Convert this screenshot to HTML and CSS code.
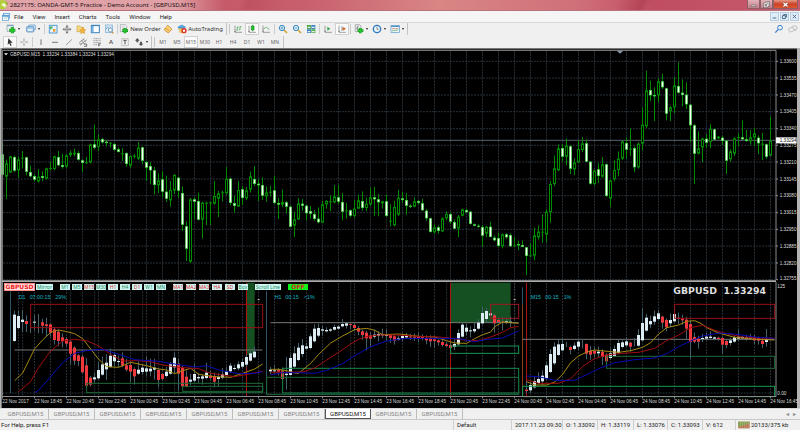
FILE: index.html
```html
<!DOCTYPE html>
<html lang="en">
<head>
<meta charset="utf-8">
<title>2827175: OANDA-GMT-5 Practice - Demo Account - [GBPUSD,M15]</title>
<link rel="stylesheet" href="styles.css">
</head>
<body>
<header class="titlebar">
  <svg class="app-icon" viewBox="0 0 30 30" aria-hidden="true"><circle cx="7" cy="14" r="14" fill="#b4cf3c"/><path d="M3 15l8-7 8 8-5 7-4-5z" fill="#f3f8d8"/><path d="M18 4l7 8-4 2z" fill="#7f9c22"/></svg>
  <h1 class="title">2827175: OANDA-GMT-5 Practice - Demo Account - [GBPUSD,M15]</h1>
  <div class="caption">
    <button class="cap" aria-label="Minimize"><svg viewBox="0 0 24 24"><path d="M4 14h16v5H4z" fill="#fff" stroke="#555" stroke-width="2"/></svg></button>
    <button class="cap" aria-label="Restore"><svg viewBox="0 0 24 24"><path d="M9 4h11v11h-4M4 9h11v11H4z" fill="none" stroke="#555" stroke-width="6"/><path d="M9 4h11v11h-4M4 9h11v11H4z" fill="none" stroke="#fff" stroke-width="3"/></svg></button>
    <button class="cap close" aria-label="Close"><svg viewBox="0 0 24 24"><path d="M5 6l14 13M19 6L5 19" stroke="#733" stroke-width="8"/><path d="M5 6l14 13M19 6L5 19" stroke="#fff" stroke-width="5"/></svg></button>
  </div>
</header>

<nav class="menubar">
  <svg class="menu-icon" viewBox="0 0 30 30" aria-hidden="true"><rect x="7" y="4" width="19" height="15" fill="#dcebf8" stroke="#4c94cf" stroke-width="2"/><rect x="4" y="10" width="19" height="15" fill="#fff" stroke="#4c94cf" stroke-width="2"/><path d="M4 12h19" stroke="#4c94cf" stroke-width="4"/><path d="M8 21l4-4 3 3 5-4" fill="none" stroke="#6a9" stroke-width="2"/></svg>
  <button>File</button><button>View</button><button>Insert</button><button>Charts</button><button>Tools</button><button>Window</button><button>Help</button>
  <div class="mdi">
    <button aria-label="Minimize chart"><svg viewBox="0 0 24 24"><path d="M6 17h12" stroke="#3e5f80" stroke-width="3"/></svg></button>
    <button aria-label="Restore chart"><svg viewBox="0 0 24 24"><path d="M9 9V5h10v9h-4M5 9h10v10H5z" fill="none" stroke="#3e5f80" stroke-width="3"/></svg></button>
    <button aria-label="Close chart"><svg viewBox="0 0 24 24"><path d="M6 6l12 12M18 6L6 18" stroke="#3e5f80" stroke-width="3"/></svg></button>
  </div>
</nav>

<div class="toolbars">
  <div class="toolbar">
    <div class="band standard">
      <button class="tool drop" aria-label="New chart"><svg viewBox="0 0 30 30"><path d="M3 3h19v19H3z" fill="#e8f2ea" stroke="#8a9aa0" stroke-width="2"/><path d="M3 5h19" stroke="#6d9fc4" stroke-width="3"/><path d="M19 10v18M10 19h18" stroke="#108a20" stroke-width="9"/><path d="M19 11v16M11 19h16" stroke="#25c52d" stroke-width="6"/></svg></button>
      <button class="tool drop" aria-label="Profiles"><svg viewBox="0 0 30 30"><rect x="8" y="3" width="20" height="15" rx="2" fill="#d8ebfa" stroke="#558dc0" stroke-width="2"/><rect x="2" y="8" width="21" height="16" rx="2" fill="#a9cdec" stroke="#427fb5" stroke-width="2"/><path d="M5 18h15" stroke="#eef7fd" stroke-width="5"/></svg></button>
      <i class="sep"></i>
      <button class="tool" aria-label="Market watch"><svg viewBox="0 0 30 30"><rect x="4" y="4" width="23" height="23" fill="#e5f1fb" stroke="#5a9fd4" stroke-width="3"/><path d="M8 16V9h6M8 9l5 5" stroke="#28a83c" stroke-width="3" fill="none"/><path d="M15 15h7v8h-7z" fill="#f39b27"/></svg></button>
      <button class="tool" aria-label="Data window"><svg viewBox="0 0 30 30"><circle cx="15" cy="16" r="6" fill="none" stroke="#888" stroke-width="2"/><path d="M15 5v22M4 16h22" stroke="#777" stroke-width="2"/><path d="M15 2l4 6h-8zM15 30l4-6h-8zM1 16l6-4v8zM29 16l-6-4v8z" fill="#777"/></svg></button>
      <button class="tool" aria-label="Navigator"><svg viewBox="0 0 30 30"><path d="M3 6h9l3 4h8v13H3z" fill="#f7dc83" stroke="#c9a544" stroke-width="2"/><path d="M20 10l3 6 7 1-5 5 1 7-6-3-6 3 1-7-5-5 7-1z" fill="#f5b43b" stroke="#bd7d18" stroke-width="1"/></svg></button>
      <button class="tool" aria-label="Terminal"><svg viewBox="0 0 30 30"><rect x="4" y="4" width="24" height="22" fill="#fff" stroke="#3d83bd" stroke-width="3"/><path d="M5 5h6v20H5z" fill="#79b3e2"/><path d="M4 5h24" stroke="#3d83bd" stroke-width="3"/></svg></button>
      <button class="tool" aria-label="Strategy tester"><svg viewBox="0 0 30 30"><rect x="4" y="3" width="21" height="22" fill="#d8eaf7" stroke="#72a7cf" stroke-width="2"/><path d="M6 15l5-6 5 5 6-6" fill="none" stroke="#5685ae" stroke-width="2"/><circle cx="19" cy="18" r="6" fill="#e9f4fb" stroke="#5c86a9" stroke-width="2"/><path d="M23 23l5 5" stroke="#c99340" stroke-width="4"/></svg></button>
      <i class="sep"></i>
      <button class="tool text"><svg viewBox="0 0 30 30"><path d="M4 2h15l4 4v17H4z" fill="#f5f6f6" stroke="#929da5" stroke-width="2"/><path d="M8 9h10M8 14h8" stroke="#aab" stroke-width="2"/><path d="M18 12v16M10 20h17" stroke="#118b20" stroke-width="8"/><path d="M18 13v14M11 20h15" stroke="#27c42f" stroke-width="5"/></svg>New Order</button>
      <button class="tool" aria-label="MetaEditor"><svg viewBox="0 0 30 30"><path d="M14 4l13 11-11 12L3 17z" fill="#efb144" stroke="#bb7820" stroke-width="2"/><path d="M5 17l11 5 9-8" fill="none" stroke="#fff0bd" stroke-width="2"/><path d="M13 6l12 9-5 2-11-6z" fill="#ffd883"/></svg></button>
      <button class="tool text auto"><svg viewBox="0 0 30 30"><ellipse cx="14" cy="10" rx="12" ry="5" fill="#4e9ada"/><path d="M7 9c0-8 14-8 14 0z" fill="#69b3eb" stroke="#357db7"/><path d="M5 14h19l-6 12H9z" fill="#f4cb58" stroke="#c59b30"/><circle cx="21" cy="20" r="8" fill="#dc3929"/><path d="M18 17h6v6h-6z" fill="#fff"/></svg>AutoTrading</button>
    </div>
    <div class="band">
      <button class="tool" aria-label="Bar chart"><svg viewBox="0 0 30 30"><path d="M6 5v20h21M3 22h6" fill="none" stroke="#777" stroke-width="2"/><path d="M13 8v12M10 18h3M13 10h4M21 6v12M18 17h3M21 8h4" fill="none" stroke="#36a345" stroke-width="2"/></svg></button>
      <button class="tool on" aria-label="Candlesticks"><svg viewBox="0 0 30 30"><path d="M6 5v20h21M3 22h6" fill="none" stroke="#777" stroke-width="2"/><path d="M17 2v20" stroke="#168b24" stroke-width="2"/><path d="M13 6h8v12h-8z" fill="#23c62e" stroke="#168b24" stroke-width="2"/></svg></button>
      <button class="tool" aria-label="Line chart"><svg viewBox="0 0 30 30"><path d="M6 5v20h21M3 22h6" fill="none" stroke="#777" stroke-width="2"/><path d="M7 17q9-15 18 1" fill="none" stroke="#45a653" stroke-width="2"/></svg></button>
      <i class="sep"></i>
      <button class="tool" aria-label="Zoom in"><svg viewBox="0 0 30 30"><path d="M18 18l9 9" stroke="#d4a32e" stroke-width="5"/><circle cx="12" cy="12" r="8" fill="#d7eefb" stroke="#418dc1" stroke-width="3"/><path d="M12 8v8M8 12h8" stroke="#327faf" stroke-width="2"/></svg></button>
      <button class="tool" aria-label="Zoom out"><svg viewBox="0 0 30 30"><path d="M18 18l9 9" stroke="#d4a32e" stroke-width="5"/><circle cx="12" cy="12" r="8" fill="#d7eefb" stroke="#418dc1" stroke-width="3"/><path d="M8 12h8" stroke="#327faf" stroke-width="2"/></svg></button>
      <button class="tool" aria-label="Tile windows"><svg viewBox="0 0 30 30"><path d="M3 3h12v12H3zM16 16h12v11H16z" fill="#4faa45"/><path d="M16 3h12v12H16zM3 16h12v11H3z" fill="#3c83c4"/><path d="M5 8h8v4H5zM18 8h8v4h-8zM5 21h8v4H5zM18 21h8v4h-8z" fill="#e9f4f8"/></svg></button>
      <i class="sep"></i>
      <button class="tool" aria-label="Auto scroll"><svg viewBox="0 0 30 30"><path d="M6 5v20h21M3 22h6" fill="none" stroke="#777" stroke-width="2"/><path d="M13 8l9 6-9 6z" fill="#35a545"/></svg></button>
      <button class="tool on" aria-label="Chart shift"><svg viewBox="0 0 30 30"><path d="M6 5v20h21M3 22h6" fill="none" stroke="#777" stroke-width="2"/><path d="M15 6v15" stroke="#4779a8" stroke-width="2"/><path d="M25 11v6h-5v4l-5-7 5-6v3z" fill="#d6682d"/></svg></button>
      <i class="sep"></i>
      <button class="tool drop" aria-label="Indicators"><svg viewBox="0 0 30 30"><path d="M4 2h13l4 4v17H4z" fill="#eee" stroke="#8b9297" stroke-width="2"/><path d="M14 7q-4-2-4 3v9M7 12h6" fill="none" stroke="#666" stroke-width="2"/><path d="M19 12v16M11 20h17" stroke="#118b20" stroke-width="8"/><path d="M19 13v14M12 20h15" stroke="#27c42f" stroke-width="5"/></svg></button>
      <button class="tool drop" aria-label="Periods"><svg viewBox="0 0 30 30"><circle cx="15" cy="15" r="11" fill="#e9f5fd" stroke="#2e76bd" stroke-width="4"/><path d="M15 8v8h5" fill="none" stroke="#555" stroke-width="2"/></svg></button>
      <button class="tool drop" aria-label="Templates"><svg viewBox="0 0 30 30"><rect x="3" y="5" width="25" height="20" fill="#edf7fc" stroke="#5395c7" stroke-width="2"/><path d="M3 7h25" stroke="#5395c7" stroke-width="4"/><path d="M6 15l6-2 5 2 8-3" fill="none" stroke="#c96841" stroke-width="2"/><path d="M6 21l6-2 5 1 8-3" fill="none" stroke="#53a65b" stroke-width="2"/></svg></button>
    </div>
    <div class="aside">
      <button class="tool" aria-label="Search"><svg viewBox="0 0 30 30"><circle cx="18" cy="11" r="7" fill="#eaf4fc" stroke="#3d7fca" stroke-width="3"/><path d="M12 17l-8 9" stroke="#3d7fca" stroke-width="4"/></svg></button>
      <button class="tool" aria-label="Community"><svg viewBox="0 0 36 30"><ellipse cx="23" cy="11" rx="10" ry="7" fill="#f1f1f1" stroke="#999" stroke-width="2"/><ellipse cx="12" cy="17" rx="10" ry="7" fill="#f1f1f1" stroke="#999" stroke-width="2"/><path d="M7 22l-1 6 6-4M27 17l2 5-6-4" fill="#eee" stroke="#999"/></svg></button>
    </div>
  </div>

  <div class="toolbar">
    <div class="band">
      <button class="tool on" aria-label="Cursor"><svg viewBox="0 0 30 30"><path d="M10 4l13 13h-7l4 8-4 2-3-8-5 4z" fill="#333"/></svg></button>
      <button class="tool" aria-label="Crosshair"><svg viewBox="0 0 30 30"><path d="M15 4v9M15 18v9M4 15h9M18 15h9" stroke="#777" stroke-width="2"/></svg></button>
      <i class="sep"></i>
      <button class="tool" aria-label="Vertical line"><svg viewBox="0 0 30 30"><path d="M15 7v17" stroke="#777" stroke-width="3"/></svg></button>
      <button class="tool" aria-label="Horizontal line"><svg viewBox="0 0 30 30"><path d="M6 16h18" stroke="#777" stroke-width="3"/></svg></button>
      <button class="tool" aria-label="Trendline"><svg viewBox="0 0 30 30"><path d="M6 24L24 7" stroke="#777" stroke-width="2"/></svg></button>
      <button class="tool" aria-label="Channel"><svg viewBox="0 0 30 30"><path d="M3 18L20 4M6 25L27 8M9 9l12 15M14 5l9 11M4 21l8-1" stroke="#777" stroke-width="2"/><path d="M18 21h8v7h-8" fill="none" stroke="#444" stroke-width="2"/></svg></button>
      <button class="tool" aria-label="Fibonacci"><svg viewBox="0 0 30 30"><path d="M4 5h22M4 11h22M4 17h22M4 23h12" stroke="#777" stroke-width="2" stroke-dasharray="3 1"/><path d="M20 28v-8h6M20 24h5" fill="none" stroke="#444" stroke-width="2"/></svg></button>
      <button class="tool glyph">A</button>
      <button class="tool" aria-label="Text label"><svg viewBox="0 0 30 30"><rect x="5" y="5" width="20" height="21" fill="none" stroke="#999" stroke-width="2" stroke-dasharray="3 1"/><path d="M10 10h10M15 10v12" stroke="#555" stroke-width="3"/></svg></button>
      <button class="tool drop" aria-label="Arrows"><svg viewBox="0 0 30 30"><path d="M10 3l7 8h-4v5H7v-5H3zM21 27l7-7h-4v-6h-6v6h-4z" fill="#555"/></svg></button>
    </div>
    <div class="band">
      <button class="tool tf">M1</button><button class="tool tf">M5</button><button class="tool tf on">M15</button><button class="tool tf">M30</button><button class="tool tf">H1</button><button class="tool tf">H4</button><button class="tool tf">D1</button><button class="tool tf">W1</button><button class="tool tf">MN</button>
    </div>
  </div>
</div>

<main class="workspace">
  <svg class="chart" id="price" viewBox="0 144 2400 702" role="img" aria-label="GBPUSD M15 price chart"></svg>
  <section class="indicator">
    <svg class="chart" id="mirror" viewBox="0 846 2400 378" role="img" aria-label="Mirror indicator"></svg>
    <div class="chips">
      <div class="group"><button class="chip symbol">GBPUSD</button><button class="chip mid">Mirror</button></div>
      <div class="group"><button class="chip">M1</button><button class="chip">M5</button><button class="chip red">M15</button><button class="chip">M30</button><button class="chip red">H1</button><button class="chip">H4</button><button class="chip red">D1</button><button class="chip">W1</button><button class="chip">MN</button></div>
      <div class="group avgs"><button class="chip red">MA1</button><button class="chip red">MA2</button><button class="chip red">MA3</button><button class="chip red">HA</button><button class="chip red">SD</button><button class="chip">Box</button></div>
      <button class="chip wide">Scroll Line</button>
      <button class="chip off">OFF</button>
    </div>
  </section>
</main>

<nav class="tabs">
  <button>GBPUSD,M15</button><button>GBPUSD,M15</button><button>GBPUSD,M15</button><button>GBPUSD,M15</button><button>GBPUSD,M15</button><button>GBPUSD,M15</button><button>GBPUSD,M15</button><button class="active">GBPUSD,M15</button><button>GBPUSD,M15</button><button>GBPUSD,M15</button>
  <div class="scroll"><button aria-label="Previous tabs">◂</button><button aria-label="Next tabs">▸</button></div>
</nav>

<footer class="status">
  <span>For Help, press F1</span><span>Default</span><span>2017.11.23 09:30</span><span>O: 1.33092</span><span>H: 1.33119</span><span>L: 1.33076</span><span>C: 1.33093</span><span>V: 612</span>
  <span class="traffic"><svg viewBox="0 0 36 24" aria-hidden="true"><path d="M1 2h34v20H1z" fill="#b3704c"/><path d="M1 2h34v5L1 18z" fill="#7da04c"/><path d="M7 2v20M13 2v20M19 2v20M25 2v20M31 2v20" stroke="#eadfca" stroke-width="1"/></svg>20133/375 kb</span>
</footer>
<script src="chart.js"></script>
</body>
</html>
```
FILE: styles.css
```css
* { box-sizing: border-box; }
body {
  margin: 0;
  min-height: 100vh;
  display: flex;
  flex-direction: column;
  background: #f0f0f0;
  color: #1c1c1c;
  font: 6px/8px "Noto Sans", "Open Sans", sans-serif;
}
button {
  margin: 0;
  padding: 0;
  border: 0;
  background: none;
  color: inherit;
  font: inherit;
  white-space: nowrap;
}
svg { display: block; }

.titlebar {
  display: flex;
  height: 11px;
  background:
    linear-gradient(115deg, transparent 30%, #b8485880 31%, transparent 36%, transparent 77%, #a83a4c90 80%, transparent 81%),
    linear-gradient(90deg, #e0a4a9 0, #dfa0a5 22%, #c65a69 28%, #c85f6d 38%, #d98685 55%, #d07079 72%, #c04d62 82%, #c75a6c 100%);
  border-bottom: 1px solid #b9737d;
}
.app-icon { width: 10px; height: 10px; }
.title { margin: 0; flex: 1; font: inherit; line-height: 10px; color: #241014; }
.caption { display: flex; padding-right: 2px; height: 9px; }
.cap {
  width: 13px;
  display: flex;
  justify-content: center;
  align-items: center;
  border: 1px solid #8f5f67;
  border-top: 0;
  background: linear-gradient(#e3b3b9, #c08089);
}
.cap svg { width: 7px; height: 7px; }
.cap.close { width: 25px; background: linear-gradient(#e49a86, #cf4128 50%, #d9582f); }

.menubar { display: flex; align-items: center; gap: 9px; height: 11px; background: #f5f5f5; }
.menubar, .tabs, .status { font-family: Roboto, "Noto Sans", sans-serif; }
.menu-icon { width: 10px; height: 10px; margin: 0 -6px 0 1px; }
.mdi { display: flex; margin-left: auto; padding-right: 1px; }
.mdi button { width: 9px; height: 9px; margin-left: 1px; border: 1px solid #b3cde4; background: #e0edf8; }

.toolbars { border-top: 1px solid #d7d7d7; height: 26px; }
.toolbar { display: flex; height: 12px; margin-bottom: 1px; }
.band { display: flex; align-items: center; padding: 0 1px 0 3px; border-right: 1px solid #c4c4c4; }
.band + .band { padding-left: 4px; background: linear-gradient(#c4c4c4, #c4c4c4) 2px 1px / 1px 10px no-repeat; }
.tool { display: flex; align-items: center; justify-content: center; width: 14px; height: 12px; color: #333; }
.tool svg { width: 10px; height: 10px; flex: none; }
.tool.on { background: #fafafa; border: 1px solid #d0d0d0; }
.tool.drop { width: 18px; gap: 2px; }
.standard .tool.drop { width: 20px; }
.tool.drop::after { content: ""; border: 1px solid transparent; border-top: 2px solid #222; border-bottom: 0; }
.tool.text { width: 42px; gap: 1px; }
.tool.auto { width: 50px; }
.tool.glyph { color: #555; font-weight: 600; }
.tool.tf { color: #666; font-size: 5px; }
.sep { width: 1px; height: 10px; margin: 0 1px; background: #ccc; }
.aside { display: flex; margin-left: auto; }

.workspace { background: #000; }
.chart { width: 100%; height: auto; }
.indicator { position: relative; }
.chart text { font-family: "Liberation Sans", sans-serif; font-size: 14px; fill: #ddd; }
.chart .caption-text { font-size: 16px; fill: #12b6c6; }
.chart .quote { font-family: "DejaVu Sans", sans-serif; font-size: 28px; font-weight: 700; fill: #dedede; }
.chart .now { fill: #111; }
.grid { stroke: #3b4854; stroke-width: 2; stroke-dasharray: 6 3; fill: none; }
.wick { stroke: #008a00; stroke-width: 3; fill: none; }
.up { stroke: #008c00; stroke-width: 3; fill: #000; }
.down { stroke: #3ccf3c; stroke-width: 2; fill: #fff; }
.mwick { stroke: #42616f; stroke-width: 3; fill: none; }
.mup { fill: #dcecf2; }
.mdown { fill: #f0393f; }
.frame { stroke: #8c8c8c; stroke-width: 3; fill: none; }
.ma { fill: none; stroke-width: 3; }
.yellow { stroke: #a58a12; }
.crimson { stroke: #a00c10; }
.blue { stroke: #0a0ab4; }

.chips { position: absolute; top: 2px; left: 5px; display: flex; gap: 7px; }
.group { display: flex; gap: 2px; }
.avgs { gap: 3px; }
.chip { display: flex; justify-content: center; width: 10px; height: 6px; background: #cdf6f3; color: #278a5a; font-size: 5px; line-height: 6px; }
.chip.red { color: #e62a30; }
.chip.symbol { width: 29px; background: #ffe3e3; color: #f01c1c; box-shadow: 0 0 0 1px #ff8a8a; font: 700 6px/6px "DejaVu Sans", sans-serif; }
.chip.mid { width: 17px; }
.chip.wide { width: 26px; }
.chip.off { width: 20px; background: #0cf01c; color: #d22; font: 700 6px/6px "DejaVu Sans", sans-serif; }

.tabs { display: flex; height: 11px; background: #f0f0f0; color: #858585; border-top: 1px solid #d8d8d8; }
.tabs > button { width: 46px; border-right: 1px solid #bdbdbd; }
.tabs > button:first-child { width: 49px; padding-left: 3px; }
.tabs > .active { background: #fff; color: #111; border: 1px solid #555; border-top: 0; }
.scroll { display: flex; gap: 4px; margin-left: auto; padding-right: 4px; }

.status {
  display: grid;
  grid-template-columns: 1fr 58px 51px 35px 36px 34px 35px 33px 65px;
  height: 11px;
  border-top: 1px solid #c8c8c8;
  line-height: 10px;
}
.status span { padding-left: 3px; white-space: nowrap; border-left: 1px solid #cfcfcf; }
.status span:first-child { padding-left: 1px; border: 0; }
.status .traffic { display: flex; align-items: center; gap: 1px; padding-left: 2px; }
.traffic svg { width: 12px; height: 8px; }
```
FILE: chart.js
```js
// Bars are "high,top,bottom,low,kind". Kinds: f filled, u hollow, w white, r red, x wick only.
const PRICE = [
  { x: 7.5, y: 330, bars: `95,133,194,194,f 149,160,200,267,u 138,139,188,188,u 137,141,182,186,f 141,148,181,203,u 123,143,146,175,u 140,142,185,196,f 167,186,199,201,f 192,198,209,214,f 177,200,214,218,u 184,198,204,214,f 173,175,206,209,u 155,174,178,181,u 137,139,177,181,u 123,141,166,169,f 131,165,171,176,f 133,136,170,174,u 121,128,135,141,u 116,128,133,139,u 123,129,149,152,f 148,151,159,186,f 141,157,160,162,u 101,103,158,160,u 44,103,113,118,f 72,88,111,123,u 83,87,97,101,f 91,95,99,109,f 97,98,101,113,u 99,102,119,122,f 113,118,126,128,f 114,130,133,153,u 127,129,162,170,f 136,138,167,174,u 132,137,140,146,u 96,113,146,150,u 110,112,152,163,f 153,156,173,213,f 157,168,181,223,f 171,181,225,253,f 190,211,226,249,u 183,208,245,262,f 197,245,266,276,f 213,240,271,290,u 192,195,242,252,u 200,203,242,264,f 229,249,344,363,f 334,349,416,453,f 264,268,455,459,u 262,268,275,327,f 248,273,329,331,f 275,278,329,386,u 275,278,281,345,u 275,277,280,345,u 213,258,281,284,u 243,250,266,321,u 241,247,250,274,u 171,206,250,254,u 203,206,279,286,f 257,279,288,308,f 213,240,290,291,u 228,238,264,285,f 231,241,265,270,u 184,199,239,248,u 168,207,222,229,f 207,221,226,273,f` },
  { x: 787.5, y: 390, bars: `142,165,197,210,f 169,187,199,215,u 167,185,188,200,u 138,181,219,222,f 203,219,224,267,f 178,216,224,231,u 213,217,230,251,f 227,230,290,292,f 245,268,287,321,u 204,220,268,270,u 207,221,227,243,f 224,227,250,271,f 228,243,251,266,f 240,252,267,272,f 232,266,277,280,f 213,223,278,279,u 210,213,223,236,u 196,214,217,243,u 165,199,217,220,u 165,202,215,222,f 189,216,245,271,f 219,241,245,266,u 238,241,257,262,f 210,236,258,263,u 194,211,236,237,u 184,213,234,242,f 203,221,234,243,u 173,202,223,228,u 171,202,208,258,f 192,208,217,259,f 212,214,220,236,u 194,214,258,261,f 223,272,275,290,u 212,231,286,289,u 179,203,254,258,u 185,205,210,219,f 189,210,227,254,f 223,227,230,234,f 202,214,230,232,u 210,213,219,224,f 206,220,241,243,f 237,242,265,272,f 263,265,306,308,f 283,292,307,311,u 286,292,303,311,f 262,265,304,306,u 244,252,265,270,u 247,252,275,282,f 268,276,296,296,f 255,260,295,321,u 236,238,257,259,u 236,240,247,248,f 243,245,282,284,f 280,283,287,289,f 283,287,290,293,f 285,291,317,350,f 288,290,311,322,u 275,290,321,322,f 317,323,331,334,f 309,324,348,351,f 310,313,349,355,u 310,313,322,326,f 310,315,349,350,f 321,346,349,350,u 332,342,346,361,f 331,345,351,351,f` },
  { x: 1579.5, y: 150, bars: `591,592,618,675,f 579,616,619,621,u 533,556,617,631,u 526,545,562,569,u 493,545,548,579,u 478,485,554,577,u 393,402,487,518,u 316,355,402,409,u 283,295,361,363,u 282,294,320,334,f 265,287,320,346,u 285,289,356,372,f 325,337,358,375,u 271,297,337,339,u 261,280,300,306,u 268,280,335,336,f 333,335,401,404,f 359,362,402,406,u 340,358,378,399,f 321,343,380,384,u 341,343,438,441,f 389,391,446,470,u 331,360,387,394,u 304,326,360,379,u 272,274,326,330,u 262,279,299,326,f 235,296,300,318,u 289,294,352,366,f 277,281,352,356,u 172,224,281,300,u 62,121,229,234,u 92,120,136,153,f 112,135,139,213,f 85,94,136,156,u 71,94,112,117,f 113,115,191,211,f 168,172,184,213,u 82,106,172,190,u 37,108,128,130,f 88,128,135,169,f 97,134,163,177,f 162,164,226,277,f 222,226,311,402,f 245,295,311,313,u 263,266,292,337,u 252,266,278,293,f 223,237,276,295,u 236,238,269,270,f 258,260,265,268,u 257,263,273,285,f 270,272,332,372,f 298,304,328,335,u 262,265,311,318,u 250,261,265,289,u 211,262,268,270,f 239,268,273,276,f 240,262,274,284,u 234,250,263,288,u 256,263,280,313,f 249,281,285,330,u 281,283,320,327,f 200,272,317,318,u` }
];

const PANELS = [
  {
    ox: 0, first: 43.5,
    bars: `98,110,189,191,w 98,114,150,153,w 96,125,132,162,w 112,129,138,162,r 122,140,140,165,x 111,131,134,158,w 108,140,140,166,x 122,133,143,166,r 119,139,144,174,r 137,139,164,176,r 149,154,186,200,r 154,161,189,205,r 166,178,190,208,r 177,183,197,205,r 187,191,227,260,r 205,209,248,261,r 228,232,249,264,r 230,236,283,286,r 240,262,323,330,r 294,299,320,326,r 284,298,304,314,w 252,276,301,304,w 236,259,290,293,w 229,254,274,306,w 212,233,267,270,w 223,231,250,265,w 233,249,252,267,w 223,241,263,267,r 242,262,275,280,r 250,261,281,312,r 268,273,295,320,r 250,275,287,291,w 258,269,282,290,w 236,271,281,293,w 242,272,280,295,w 242,269,275,305,w 270,276,306,328,r 284,288,303,308,r 267,281,294,298,w 252,259,287,290,w 223,239,268,287,w 242,257,287,338,r 263,269,325,331,r 278,296,326,328,r 288,305,311,322,w 257,288,308,313,w 284,297,301,316,w 289,295,302,320,w 254,284,300,304,w 279,293,300,305,r 284,294,311,328,r 286,297,303,324,w 270,289,299,304,w 266,279,291,298,w 255,263,280,285,w 260,270,273,277,w 250,259,271,277,w 243,252,266,270,w 230,237,260,267,w 219,226,248,251,w 206,221,238,241,w`,
    fills: [[740, 14, 24, 216, "#145022"]],
    rects: [[92, 79, 696, 70, "#9c1015"], [260, 316, 528, 28, "#1c6a38"], [548, 325, 240, 15, "#1c6a38"]],
    lines: [[32, 40, 32, 345, "#2d5468"], [740, 14, 740, 356, "#b01010"], [44, 216, 788, 216, "#777"], [8, 14, 8, 350, "#1b4047"]],
    dotted: [212, 284, 428, 476, 524, 68],
    mas: [["yellow", "44,308 68,285 104,212 128,186 152,163 176,156 200,161 224,167 248,182 272,213 296,244 320,266 356,268 392,253 440,263 476,273 500,276 524,287 548,278 572,271 596,289 644,296 692,298 728,286 764,273 788,258"], ["crimson", "56,341 92,311 116,268 152,219 188,189 224,184 260,188 296,204 332,229 368,249 416,248 452,251 488,261 536,268 596,272 632,286 704,296 752,287 788,280"], ["blue", "104,344 116,337 152,296 188,254 224,226 260,218 308,214 356,229 404,245 476,250 548,262 584,267 620,263 656,276 716,287 764,286 788,281"]],
    caption: [["D1", 56], ["07:00:15", 89], ["29%", 166]]
  },
  {
    ox: 780, first: 31.5,
    bars: `267,275,280,289,w 262,277,280,286,w 270,276,281,292,r 268,277,303,307,r 237,287,291,335,w 229,240,291,293,w 205,226,266,269,w 195,209,246,249,w 183,202,228,237,w 194,205,212,215,w 167,175,210,214,w 139,152,190,193,w 137,150,173,178,w 143,154,158,173,w 148,156,160,163,w 151,154,158,162,w 140,147,155,158,w 141,146,152,155,w 123,138,145,148,w 133,136,143,151,w 136,138,141,154,r 134,141,150,158,r 144,150,161,172,r 155,160,171,186,r 158,164,181,217,r 163,172,182,205,r 154,170,176,182,w 160,168,173,190,w 152,168,172,180,w 156,171,173,186,w 168,171,180,194,r 172,175,188,200,r 170,181,185,188,w 166,174,181,190,w 165,173,178,183,w 168,175,178,186,r 166,176,179,189,r 165,176,180,193,r 168,176,180,187,r 172,180,187,199,r 172,183,190,207,r 174,184,189,210,r 184,187,193,203,r 186,192,201,206,r 192,199,204,208,r 194,201,210,214,r 185,198,206,216,w 154,165,199,203,w 135,140,176,179,w 138,149,161,172,w 145,157,160,178,w 135,153,160,165,w 123,134,152,155,w 86,105,136,140,w 90,99,123,133,w 96,106,112,115,w 107,112,136,164,r 120,126,132,136,r 117,131,134,157,r 120,130,133,138,w 116,131,134,147,w`,
    fills: [[572, 14, 180, 120, "#145022"]],
    rects: [[692, 79, 84, 42, "#9c1a22"], [572, 204, 204, 22, "#169656"], [68, 271, 708, 74, "#148848"], [20, 298, 756, 51, "#1c6a38"]],
    lines: [[20, 40, 20, 349, "#2d5468"], [572, 14, 572, 356, "#b01010"], [32, 134, 776, 134, "#777"], [788, 28, 788, 80, "#2d5468"], [788, 80, 788, 356, "#8c3d15"], [800, 14, 800, 356, "#b01010"]],
    dotted: [272, 560, 764],
    mas: [["yellow", "32,274 56,274 80,278 104,285 116,286 152,256 176,229 212,195 248,174 284,155 320,151 344,157 368,170 416,168 476,175 524,177 560,188 584,195 620,196 644,182 668,170 692,162 704,146 728,132 776,136"], ["crimson", "32,283 128,282 164,270 200,246 236,223 272,198 296,184 320,176 356,171 416,171 476,175 536,177 584,182 620,187 656,188 692,177 728,163 752,149 776,145"], ["blue", "32,291 68,284 116,284 164,286 200,277 248,257 284,233 332,206 380,189 428,182 488,181 548,181 596,182 644,191 680,184 728,180 776,159"]],
    caption: [["H1", 44], ["00:15", 76], ["<1%", 132]]
  },
  {
    ox: 1560, first: 19.5,
    bars: `310,335,339,345,r 310,321,337,345,w 297,309,328,331,w 283,303,315,318,w 277,293,310,322,w 251,262,301,306,w 213,228,282,285,w 193,206,256,261,w 185,199,231,234,w 181,198,217,220,w 192,200,200,207,x 203,207,216,229,r 194,203,213,217,w 184,191,206,218,w 183,200,200,211,x 196,198,227,244,r 204,218,230,246,r 206,219,227,239,r 206,221,226,239,w 214,221,237,261,r 226,230,250,262,r 211,226,240,245,w 202,213,234,237,w 184,195,225,229,w 187,193,207,211,w 177,190,202,206,w 191,194,206,221,r 180,200,200,205,x 154,171,203,206,w 91,135,187,190,w 108,119,158,161,w 113,129,139,151,w 98,115,131,141,w 96,106,123,127,w 113,116,134,152,r 121,126,148,160,r 106,126,136,147,w 83,108,130,133,w 104,119,123,138,r 110,122,127,140,r 116,125,152,186,r 128,138,192,242,r 164,177,191,196,r 173,182,191,212,r 168,180,183,192,w 165,176,182,186,w 160,176,180,184,w 176,178,182,187,w 176,179,183,188,r 175,180,200,228,r 185,189,201,210,r 180,187,195,202,w 174,178,191,194,w 155,176,182,189,w 174,177,181,185,w 170,178,183,188,w 168,176,181,184,w 170,178,187,199,r 176,181,188,200,r 180,188,198,210,r 153,184,192,206,w`,
    fills: [],
    rects: [[464, 79, 300, 42, "#9c1015"], [260, 235, 504, 36, "#1c6a38"], [8, 325, 756, 31, "#129a4c"]],
    lines: [[8, 184, 764, 184, "#777"]],
    dotted: [],
    mas: [["yellow", "20,311 44,321 80,321 104,312 128,289 152,254 176,234 200,222 224,216 272,221 296,223 332,218 368,208 392,194 416,168 440,149 476,141 500,130 524,128 544,137 560,149 596,165 644,178 692,183 764,186"], ["crimson", "20,305 56,316 116,316 152,302 188,265 224,242 260,231 308,226 356,223 404,211 440,188 476,171 512,149 548,142 584,157 620,167 668,177 716,180 764,181"], ["blue", "20,294 56,296 104,307 164,307 200,290 236,272 284,254 344,245 404,240 440,227 476,206 512,189 548,174 596,165 644,168 704,177 764,181"]],
    caption: [["M15", 32], ["00:15", 76], ["1%", 131]]
  }
];

const TOP = 834; // vertical origin of the indicator panels

function candles(list, x0, y0, wickClass, upKinds) {
  return list.split(" ").map((row, i) => {
    const [h, t, b, l, kind] = row.split(",");
    const x = x0 + i * 12;
    const wick = `<path class="${wickClass}" d="M${x} ${+h + y0}V${+l + y0}"/>`;
    if (kind === "x") return wick;
    if (kind === "u" && b - t < 5) return wick + `<path class="wick" d="M${x - 4.5} ${+t + y0 + 1.5}h9"/>`;
    const height = Math.max(b - t, 3);
    const inset = kind === "f" ? 3.5 : kind === "u" ? 3 : 4.5;
    const yPad = kind === "u" ? 1.5 : kind === "f" ? 1 : 0;
    return wick + `<rect class="${upKinds[kind]}" x="${x - inset}" y="${+t + y0 + yPad}" width="${inset * 2}" height="${Math.max(height - 2 * yPad, 1)}"/>`;
  }).join("");
}

function verticals(y1, y2) {
  let out = "";
  for (let x = 55.5; x < 2320; x += 48) out += `<path class="grid" d="M${x} ${y1}V${y2}"/>`;
  return out;
}

function drawPrice() {
  let s = `<path d="M0 144h2400v4H0z" fill="#777"/><path d="M0 144h5v702H0zM2391 144h9v702h-9z" fill="#b4b4b4"/>`;
  s += verticals(152, 840);
  for (let k = 0; k < 14; k++) {
    const y = Math.round(184 + 50.4 * k);
    s += `<path class="grid" d="M9 ${y}H2326"/><path class="frame" d="M2328 ${y}h6"/>`;
    s += `<text x="2339" y="${Math.min(y + 5, 840)}">${(1.336 - k * 0.00065).toFixed(5)}</text>`;
  }
  s += `<path d="M8 421H2328" stroke="#596270" stroke-width="3"/>`;
  s += PRICE.map(p => candles(p.bars, p.x, p.y, "wick", { u: "up", f: "down" })).join("");
  s += `<path class="frame" d="M7 846V151H2328V840"/><path d="M5 843.5H2328" stroke="#aaa" stroke-width="5"/>`;
  s += `<path d="M1850 152h20l-10 9z" fill="#8294a5"/>`;
  s += `<path d="M2328 412h62v18h-62z" fill="#fff"/><text class="now" x="2339" y="426">1.33294</text>`;
  s += `<path d="M12 160h12l-6 6z" fill="#fff"/><text x="30" y="167">GBPUSD,M15&#160; 1.33234 1.33384 1.33234 1.33294</text>`;
  document.getElementById("price").innerHTML = s;
}

function drawMirror() {
  let s = `<path d="M0 846h5v378H0zM2391 846h9v378h-9z" fill="#b4b4b4"/>` + verticals(849, 1186);
  s += `<path class="grid" d="M8 1179H2326"/>`;
  for (const p of PANELS) {
    s += `<g transform="translate(${p.ox} ${TOP})">`;
    s += p.fills.map(f => `<rect x="${f[0]}" y="${f[1]}" width="${f[2]}" height="${f[3]}" fill="${f[4]}"/>`).join("");
    s += p.dotted.map(x => `<path class="grid" d="M${x} 14V352"/>`).join("");
    s += p.lines.map(l => `<path d="M${l[0] - 0.5} ${l[1]}L${l[2] - 0.5} ${l[3]}" stroke="${l[4]}" stroke-width="3"/>`).join("");
    s += candles(p.bars, p.first, 0, "mwick", { w: "mup", r: "mdown" });
    s += p.rects.map(r => `<rect x="${r[0]}" y="${r[1]}" width="${r[2]}" height="${r[3]}" fill="none" stroke="${r[4]}" stroke-width="3"/>`).join("");
    s += p.mas.map(m => `<polyline class="ma ${m[0]}" points="${m[1]}"/>`).join("");
    s += p.caption.map(c => `<text class="caption-text" x="${c[1]}" y="64">${c[0].replace("<", "&lt;")}</text>`).join("");
    s += `</g>`;
  }
  s += `<path d="M773 899h6M1541 899h6" stroke="#ccc" stroke-width="3"/>`;
  s += `<path class="frame" d="M7 846V1189.5H2328V846"/>`;
  s += `<text class="quote" x="2020" y="881">GBPUSD&#160; 1.33294</text>`;
  s += `<text x="2332" y="863">125</text><text x="2332" y="1184">0.00</text>`;
  for (let i = 0; i < 25; i++) {
    const hour = 16 + 45 / 60 + i * 2;
    const day = 22 + Math.floor(hour / 24);
    const label = i === 0 ? "22 Nov 2017" : `${day} Nov ${String(Math.floor(hour) % 24).padStart(2, "0")}:45`;
    s += `<path class="frame" d="M${7.5 + 96 * i} 1189v6"/><text x="${7 + 96 * i}" y="1210">${label}</text>`;
  }
  document.getElementById("mirror").innerHTML = s;
}

drawPrice();
drawMirror();
```
